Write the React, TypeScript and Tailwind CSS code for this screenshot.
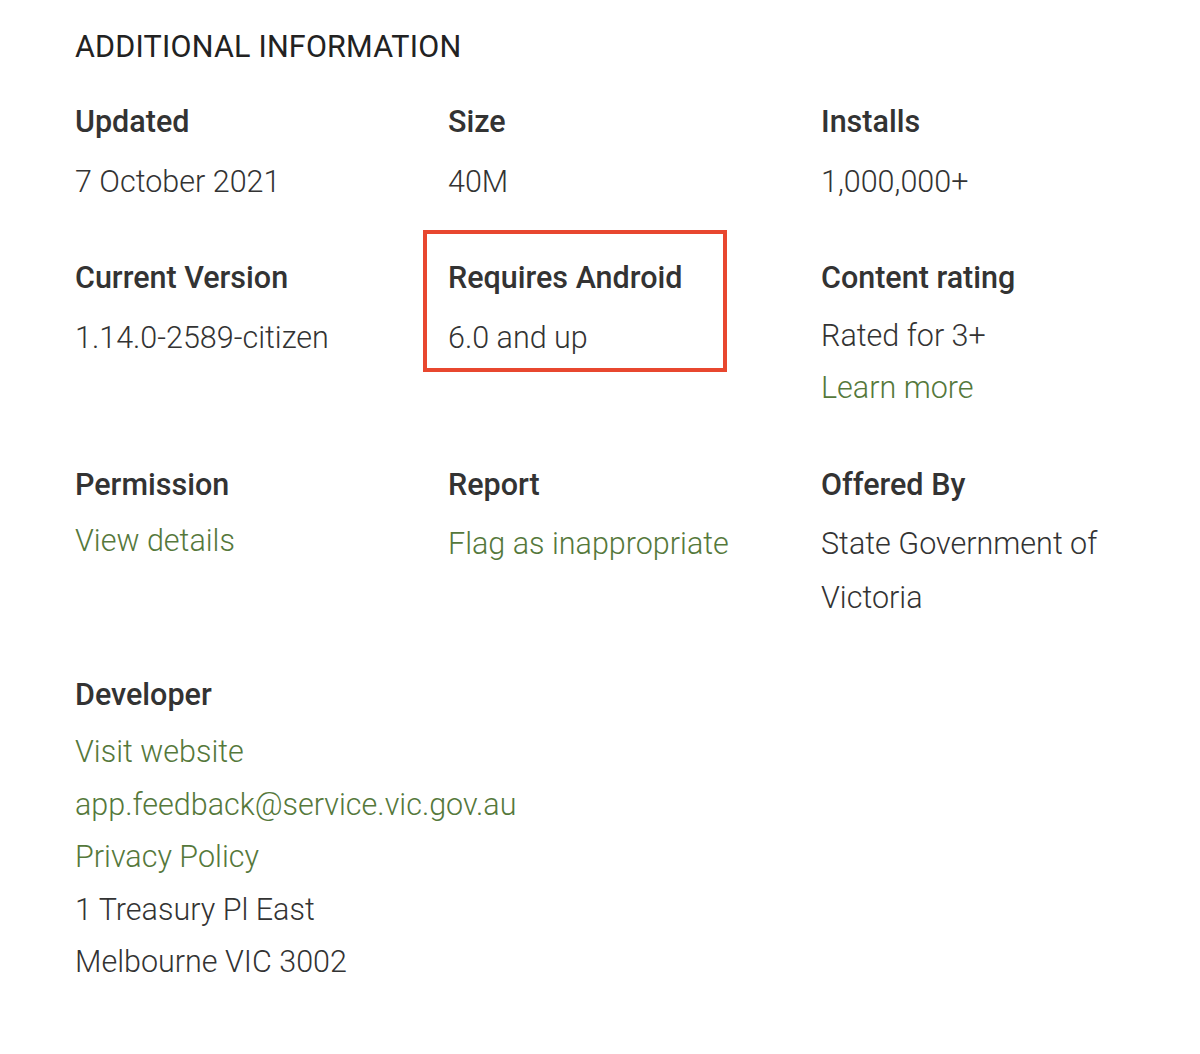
import React from "react";

const font = { fontFamily: "Roboto, 'Liberation Sans', sans-serif" };

function Label({ children, mb = "mb-[14px]" }: { children: React.ReactNode; mb?: string }) {
  return <div className={`text-[30.5px] leading-[40px] font-medium text-[#333333] whitespace-nowrap ${mb}`}>{children}</div>;
}

function Val({ children, link, lh = "leading-[52px]" }: { children: React.ReactNode; link?: boolean; lh?: string }) {
  return (
    <div className={`text-[30.5px] font-light whitespace-nowrap ${lh} ${link ? "text-[#55783b]" : "text-[#333333]"}`}>
      {children}
    </div>
  );
}

export default function App() {
  return (
    <div className="w-[1200px] h-[1054px] bg-white" style={font}>
      <div className="pl-[75px] pt-[27px]">
        <h2 className="text-[30.5px] leading-[40px] font-normal text-[#222222] tracking-[0.2px]">ADDITIONAL INFORMATION</h2>
        <div className="grid grid-cols-[373px_373px_373px] mt-[35px]">
          <div>
            <Label>Updated</Label>
            <Val>7 October 2021</Val>
          </div>
          <div>
            <Label>Size</Label>
            <Val>40M</Val>
          </div>
          <div>
            <Label>Installs</Label>
            <Val>1,000,000+</Val>
          </div>

          <div className="mt-[50px]">
            <Label mb="mb-[14px]">Current Version</Label>
            <Val>1.14.0-2589-citizen</Val>
          </div>
          <div className="relative mt-[50px]">
            <Label mb="mb-[14px]">Requires Android</Label>
            <Val>6.0 and up</Val>
            <div className="absolute left-[-25px] top-[-28px] w-[304px] h-[142px] border-[4px] border-[#e8472f]" />
          </div>
          <div className="mt-[50px]">
            <Label mb="mb-[12px]">Content rating</Label>
            <Val>Rated for 3+</Val>
            <Val link>Learn more</Val>
          </div>

          <div className="mt-[51px]">
            <Label mb="mb-[10px]">Permission</Label>
            <Val link>View details</Val>
          </div>
          <div className="mt-[51px]">
            <Label mb="mb-[13px]">Report</Label>
            <Val link>Flag as inappropriate</Val>
          </div>
          <div className="mt-[51px]">
            <Label mb="mb-[13px]">Offered By</Label>
            <Val>State Government of</Val>
            <div className="mt-[2px]">
              <Val>Victoria</Val>
            </div>
          </div>

          <div className="col-span-3 mt-[51px]">
            <Label mb="mb-[11px]">Developer</Label>
            <Val link lh="leading-[52.5px]">Visit website</Val>
            <Val link lh="leading-[52.5px]">app.feedback@service.vic.gov.au</Val>
            <Val link lh="leading-[52.5px]">Privacy Policy</Val>
            <Val lh="leading-[52.5px]">1 Treasury Pl East</Val>
            <Val lh="leading-[52.5px]">Melbourne VIC 3002</Val>
          </div>
        </div>
      </div>
    </div>
  );
}
